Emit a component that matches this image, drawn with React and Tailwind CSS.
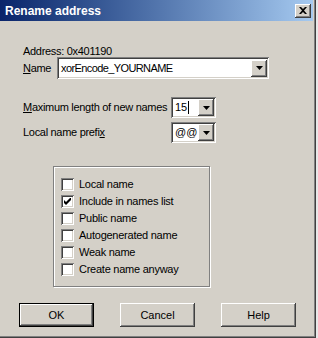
import React from "react";

const raised =
  "shadow-[inset_-1px_-1px_0_#404040,inset_1px_1px_0_#ffffff,inset_-2px_-2px_0_#808080,inset_2px_2px_0_#d4d0c8]";
const sunken =
  "shadow-[inset_1px_1px_0_#808080,inset_-1px_-1px_0_#ffffff,inset_2px_2px_0_#404040,inset_-2px_-2px_0_#d4d0c8]";

function Arrow() {
  return (
    <svg width="7" height="4" viewBox="0 0 7 4">
      <path d="M0 0H7L3.5 4Z" fill="#000" />
    </svg>
  );
}

function Combo({ width, height, children }) {
  return (
    <div
      className={`relative flex items-center bg-white ${sunken}`}
      style={{ width, height }}
    >
      <div className="flex-1 pl-[4px] pr-[2px] text-[11px] leading-[13px] text-black whitespace-nowrap overflow-hidden">
        {children}
      </div>
      <div
        className={`mr-[2px] flex items-center justify-center w-[16px] h-[17px] bg-[#d4d0c8] ${raised}`}
      >
        <Arrow />
      </div>
    </div>
  );
}

function Check({ checked, label }) {
  return (
    <div className="flex items-center h-[13px] mb-[4px]">
      <div className={`w-[13px] h-[13px] bg-white flex items-center justify-center ${sunken}`}>
        {checked && (
          <svg width="7" height="7" viewBox="0 0 7 7">
            <path d="M0 2v3l2 2 5-5V-1L2 4Z" fill="#000" />
          </svg>
        )}
      </div>
      <span className="ml-[5px] text-[11px] leading-[13px] tracking-[-0.25px] text-black whitespace-nowrap">
        {label}
      </span>
    </div>
  );
}

function Button({ children, isDefault }) {
  return (
    <div
      className={`w-[75px] h-[24px] flex items-center justify-center text-[11px] text-black bg-[#d4d0c8] ${
        isDefault
          ? "shadow-[inset_0_0_0_1px_#000000,inset_-2px_-2px_0_#404040,inset_2px_2px_0_#ffffff,inset_-3px_-3px_0_#808080]"
          : raised
      }`}
    >
      {children}
    </div>
  );
}

export default function App() {
  return (
    <div
      className="w-[318px] h-[338px] bg-[#e8e8e8] overflow-hidden"
      style={{ fontFamily: '"Liberation Sans", Arial, sans-serif' }}
    >
      <div className="w-[316px] h-[338px] border-r border-b border-[#404040]">
        <div className="w-[315px] h-[337px] border-r border-b border-[#808080] bg-[#d4d0c8]">
          <div className="w-[313px] h-[21px] flex items-center bg-linear-to-r from-[#0a246a] to-[#a6caf0] pl-[5px] pr-[1px]">
            <span className="flex-1 text-white font-bold text-[12px] leading-[14px]">
              Rename address
            </span>
            <div
              className={`w-[16px] h-[14px] flex items-center justify-center bg-[#d4d0c8] mr-[1px] ${raised}`}
            >
              <svg width="8" height="7" viewBox="0 0 8 7">
                <path
                  d="M0 0h2l2 2 2-2h2L5 3.5 8 7H6L4 5 2 7H0l3-3.5Z"
                  fill="#000"
                />
              </svg>
            </div>
          </div>

          <div className="flex flex-col pl-[23px] text-[11px] text-black tracking-[-0.3px]">
            <div className="mt-[24px] h-[12px] leading-[12px] whitespace-nowrap">Address: 0x401190</div>
            <div className="flex items-center h-[22px]">
              <span className="w-[34px] leading-[13px] whitespace-nowrap">
                <u>N</u>ame
              </span>
              <div className="tracking-[-0.6px]">
                <Combo width={212} height={22}>
                  xorEncode_YOURNAME
                </Combo>
              </div>
            </div>

            <div className="flex items-center h-[21px] mt-[18px]">
              <span className="w-[148px] leading-[13px] whitespace-nowrap">
                <u>M</u>aximum length of new names
              </span>
              <div className="tracking-normal">
                <Combo width={45} height={21}>
                  <span className="inline-flex items-center">
                    15<span className="inline-block w-[1px] h-[13px] bg-black ml-[1px]" />
                  </span>
                </Combo>
              </div>
            </div>

            <div className="flex items-center h-[21px] mt-[4px]">
              <span className="w-[148px] leading-[13px] whitespace-nowrap">
                Local name prefi<u>x</u>
              </span>
              <div className="tracking-normal">
                <Combo width={45} height={21}>
                  @@
                </Combo>
              </div>
            </div>

            <div className="ml-[30px] mt-[23px] w-[157px] h-[121px] border border-[#808080] shadow-[inset_1px_1px_0_#ffffff,1px_1px_0_#ffffff] pt-[11px] pl-[7px]">
              <Check label="Local name" />
              <Check checked label="Include in names list" />
              <Check label="Public name" />
              <Check label="Autogenerated name" />
              <Check label="Weak name" />
              <Check label="Create name anyway" />
            </div>
          </div>

          <div className="flex mt-[16px] pl-[19px] gap-[26px]">
            <Button isDefault>OK</Button>
            <Button>Cancel</Button>
            <Button>Help</Button>
          </div>
        </div>
      </div>
    </div>
  );
}
